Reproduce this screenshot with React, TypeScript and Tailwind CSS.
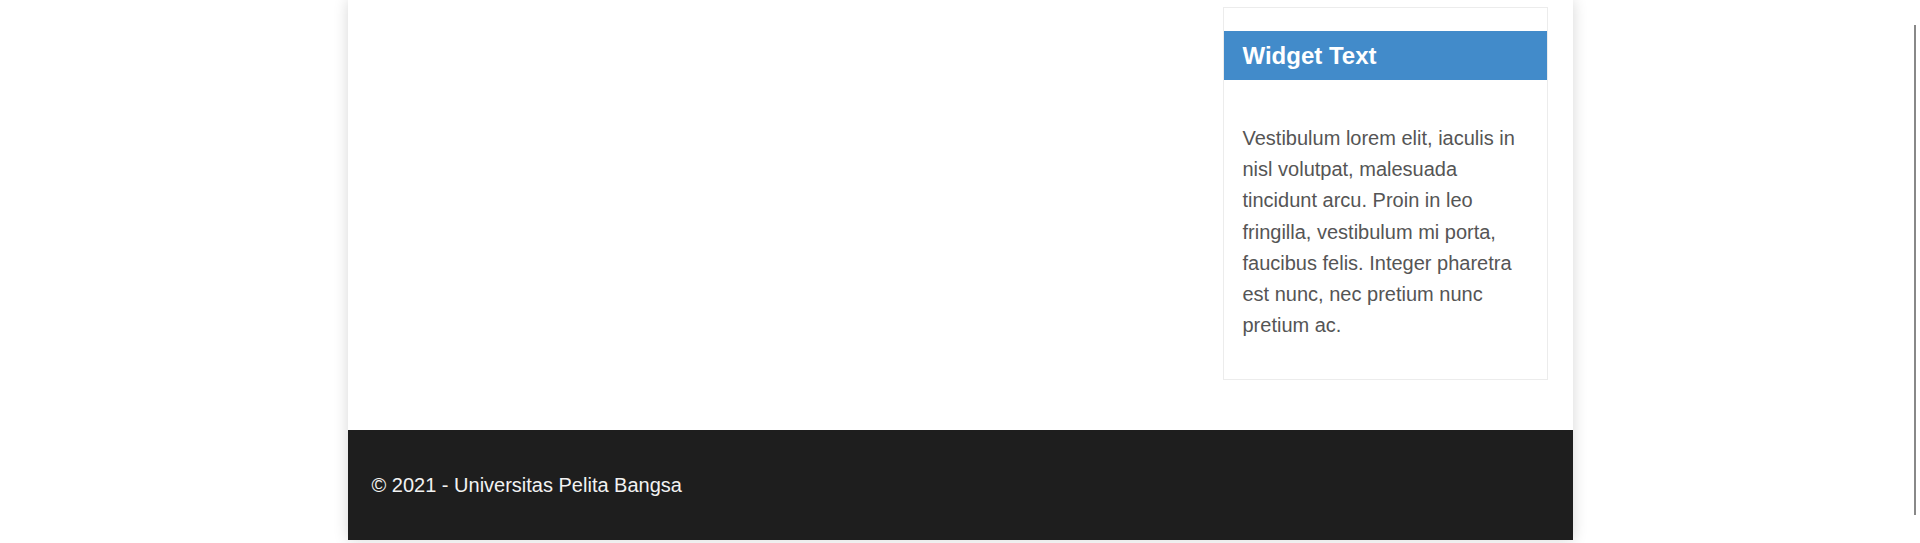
export default function App() {
  return (
    <div className="min-h-[543px] bg-white font-['Liberation_Sans',Arial,sans-serif]">
      <div className="mx-auto w-[1225px] bg-white shadow-[0_0_14px_rgba(0,0,0,0.16)]">
        {/* Content + sidebar */}
        <div className="flex justify-end pt-[7px] pr-[25px] pb-[50px]">
          <aside className="w-[325px] border border-[#ececec] pt-[23px]">
            <h3 className="flex h-[49px] items-center bg-[#428bca] px-[19px] text-[24px] font-bold text-white">
              Widget Text
            </h3>
            <p className="px-[19px] pt-[43px] pb-[38px] text-[20px] leading-[31.2px] text-[#555]">
              Vestibulum lorem elit, iaculis in nisl volutpat, malesuada tincidunt arcu. Proin in leo fringilla,
              vestibulum mi porta, faucibus felis. Integer pharetra est nunc, nec pretium nunc pretium ac.
            </p>
          </aside>
        </div>

        {/* Footer */}
        <footer className="flex h-[110px] items-center bg-[#1e1e1e] px-6 text-[20px] text-[#f2f2f2]">
          © 2021 - Universitas Pelita Bangsa
        </footer>
      </div>

      {/* scrollbar thumb */}
      <div className="fixed top-[25px] left-[1914px] h-[490px] w-[2px] bg-[#888]" />
    </div>
  )
}
